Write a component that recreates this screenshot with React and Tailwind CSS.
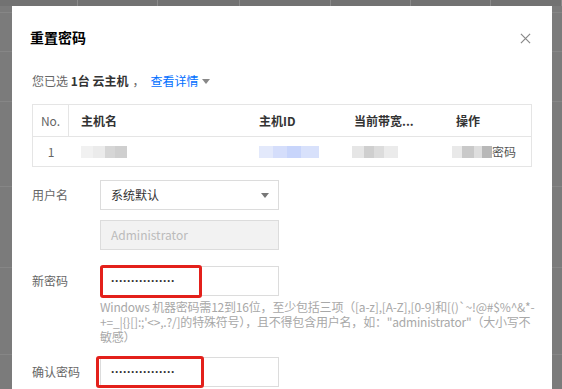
import React from 'react';

const font = { fontFamily: '"Noto Sans CJK SC", "Noto Sans", "Liberation Sans", sans-serif' };

const Blur = ({ blocks }) => (
  <div className="flex items-center h-[12px]">
    {blocks.map((c, i) => (
      <div key={i} className="h-[12px]" style={{ width: c[0], background: c[1] }} />
    ))}
  </div>
);

const Field = ({ label, children, className = '' }) => (
  <div className={'flex ' + className}>
    <div className="w-[68px] shrink-0 h-[30px] flex items-center text-[12px] text-[#666]">{label}</div>
    <div className="flex-1">{children}</div>
  </div>
);

const Dots = () => (
  <div className="h-[30px] w-[179px] border border-[#dcdcdc] bg-white flex items-center pl-[10px]">
    <span className="text-[12px] font-bold text-[#333] leading-none" style={{ fontFamily: '"Liberation Sans", sans-serif' }}>
      ················
    </span>
  </div>
);

export default function App() {
  return (
    <div className="relative w-[562px] h-[389px] overflow-hidden bg-[#7b7b7b]" style={font}>
      {/* page behind the overlay */}
      <div className="absolute inset-0 flex flex-col">
        <div className="h-[6px] flex bg-[#727272]">
          {[78, 80, 82, 91, 80, 80, 71].map((w, i) => (
            <div key={i} className="h-full border-r border-[#8a8a8a]" style={{ width: w }} />
          ))}
        </div>
        {[7, 39, 50, 85, 81, 87].map((h, i) => (
          <div key={i} className="border-b border-[#868686]" style={{ height: h }} />
        ))}
      </div>

      {/* modal */}
      <div className="absolute left-[12px] top-[6px] w-[540px] h-[400px] bg-white">
        <div className="flex items-center justify-between pl-[18px] pr-[21px] pt-[4px] h-[58px]">
          <h2 className="text-[14px] font-bold text-[#000] leading-none">重置密码</h2>
          <svg width="11" height="11" viewBox="0 0 12 12" className="mt-[2px]">
            <path d="M1 1L11 11M11 1L1 11" stroke="#888" strokeWidth="1.3" />
          </svg>
        </div>

        <div className="px-[20px]">
          <div className="h-[20px] flex items-center text-[12px] text-[#666] mt-[7px]">
            您已选&nbsp;<b className="text-[#333]">1台</b>&nbsp;<b className="text-[#333] font-bold">云主机</b>
            <span className="ml-[4px] mr-[6px]">，</span>
            <span className="text-[#006eff]">查看详情</span>
            <svg width="8" height="5" viewBox="0 0 8 5" className="ml-[3px]">
              <path d="M0 0H8L4 5Z" fill="#888" />
            </svg>
          </div>

          <div className="mt-[13px] border border-[#e5e5e5] text-[12px]">
            <div className="flex h-[31px] items-center font-bold text-[#333]">
              <div className="w-[36px] h-full flex items-center justify-center border-r border-[#e5e5e5] font-normal text-[#666]">No.</div>
              <div className="w-[178px] pl-[12px]">主机名</div>
              <div className="w-[95px] pl-[12px]">主机ID</div>
              <div className="w-[102px] pl-[12px]">当前带宽...</div>
              <div className="flex-1 pl-[12px]">操作</div>
            </div>
            <div className="flex h-[30px] items-center border-t border-[#e5e5e5] text-[#333]">
              <div className="w-[36px] text-center text-[#666]">1</div>
              <div className="w-[178px] pl-[12px]">
                <Blur blocks={[[12, '#f1f1f1'], [12, '#ebebeb'], [10, '#d6d6d6'], [12, '#cfcfcf']]} />
              </div>
              <div className="w-[95px] pl-[12px]">
                <Blur blocks={[[14, '#e3e9fb'], [14, '#d5defb'], [14, '#c8d5fb'], [18, '#d8e1fb']]} />
              </div>
              <div className="w-[102px] pl-[10px]">
                <Blur blocks={[[12, '#e6e6e6'], [10, '#cfcfcf'], [10, '#dcdcdc'], [14, '#ebebeb']]} />
              </div>
              <div className="flex-1 pl-[8px] flex items-center">
                <Blur blocks={[[10, '#e9e9e9'], [12, '#c9c9c9'], [8, '#dedede'], [10, '#b8b8b8']]} />
                <span className="text-[#555]">密码</span>
              </div>
            </div>
          </div>

          <Field label="用户名" className="mt-[13px]">
            <div className="h-[30px] w-[179px] border border-[#dcdcdc] flex items-center justify-between pl-[10px] pr-[9px] text-[12px] text-[#333]">
              <span>系统默认</span>
              <svg width="8" height="5" viewBox="0 0 8 5">
                <path d="M0 0H8L4 5Z" fill="#777" />
              </svg>
            </div>
          </Field>

          <Field label="" className="mt-[10px]">
            <div className="h-[30px] w-[179px] border border-[#dcdcdc] bg-[#f2f2f2] flex items-center pl-[10px] text-[12px] text-[#bbb]">
              Administrator
            </div>
          </Field>

          <Field label="新密码" className="mt-[16px]">
            <Dots />
            <div className="text-[12px] leading-[15px] text-[#a8a8a8] mt-[3px] whitespace-nowrap tracking-[-0.2px]">
              <div>Windows 机器密码需12到16位，至少包括三项（[a-z],[A-Z],[0-9]和[()`~!@#$%^&amp;*-</div>
              <div>+=_|{'{}'}[]:;'&lt;&gt;,.?/]的特殊符号），且不得包含用户名，如："administrator"（大小写不</div>
              <div>敏感）</div>
            </div>
          </Field>

          <Field label="确认密码" className="mt-[13px]">
            <Dots />
          </Field>
        </div>
      </div>

      {/* annotation boxes */}
      <div className="absolute left-[100px] top-[265px] w-[102px] h-[33px] border-[3px] border-[#e3201b] rounded-[3px]" />
      <div className="absolute left-[96px] top-[356px] w-[108px] h-[32px] border-[3px] border-[#e3201b] rounded-[3px]" />
    </div>
  );
}
